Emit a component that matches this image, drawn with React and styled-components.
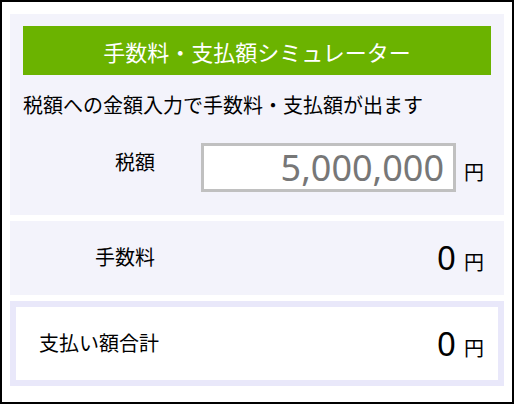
import React from "react";
import styled, { createGlobalStyle } from "styled-components";

const Global = createGlobalStyle`
  html, body { margin: 0; padding: 0; background: #fff; }
  body { font-family: "Noto Sans", "Noto Sans CJK JP", sans-serif; color: #000; }
  * { box-sizing: border-box; }
`;

const Frame = styled.div`
  width: 514px;
  height: 404px;
  border: 2px solid #000;
  padding: 12px 8px 0 8px;
  display: flex;
  flex-direction: column;
  gap: 6px;
`;

const Panel = styled.section`
  background: ${(p) => (p.$boxed ? "#fff" : "#f3f3fb")};
  border: ${(p) => (p.$boxed ? "6px solid #e9e8fa" : "none")};
  padding: ${(p) => p.$pad};
  height: ${(p) => p.$h}px;
  display: flex;
  flex-direction: column;
  justify-content: ${(p) => (p.$center ? "center" : "flex-start")};
`;

const Header = styled.h1`
  margin: 0;
  height: 49px;
  background: #6bb300;
  color: #fff;
  font-size: 22px;
  font-weight: 400;
  display: flex;
  align-items: center;
  justify-content: center;
  letter-spacing: 0;
`;

const Desc = styled.p`
  margin: 16px 0 0 0;
  font-size: 20px;
  line-height: 30px;
`;

const Row = styled.div`
  display: flex;
  align-items: center;
  margin-top: ${(p) => p.$mt || 0}px;
  padding-right: ${(p) => p.$pr}px;
`;

const Label = styled.div`
  width: ${(p) => p.$w}px;
  text-align: right;
  font-size: ${(p) => p.$fs || 20}px;
  line-height: 30px;
  margin-bottom: ${(p) => p.$lift || 0}px;
  flex: none;
`;

const Value = styled.div`
  flex: 1;
  display: flex;
  justify-content: flex-end;
  align-items: baseline;
`;

const Amount = styled.span`
  font-size: 33px;
  line-height: 40px;
`;

const Unit = styled.span`
  font-size: 20px;
  margin-left: 8px;
`;

const InputBox = styled.input`
  width: 255px;
  height: 49px;
  border: 3px solid #c0c0c0;
  background: #fff;
  color: #777;
  font-family: "Noto Sans", "Noto Sans CJK JP", sans-serif;
  font-size: 36px;
  text-align: right;
  padding: 0 9px 0 4px;
  outline: none;
`;

const InputWrap = styled.div`
  flex: 1;
  display: flex;
  justify-content: flex-end;
  align-items: center;
`;

const InputUnit = styled.span`
  font-size: 20px;
  margin-left: 8px;
  margin-top: 8px;
`;

export default function App() {
  return (
    <>
      <Global />
      <Frame>
        <Panel $pad="12px 13px 0 13px" $h={201}>
          <Header>手数料・支払額シミュレーター</Header>
          <Desc>税額への金額入力で手数料・支払額が出ます</Desc>
          <Row $mt={22} $pr={7}>
            <Label $w={132} $lift={10}>税額</Label>
            <InputWrap>
              <InputBox defaultValue="5,000,000" readOnly />
              <InputUnit>円</InputUnit>
            </InputWrap>
          </Row>
        </Panel>
        <Panel $pad="0 20px 0 0" $h={74} $center>
          <Row>
            <Label $w={145}>手数料</Label>
            <Value>
              <Amount>0</Amount>
              <Unit>円</Unit>
            </Value>
          </Row>
        </Panel>
        <Panel $boxed $pad="0 14px 0 0" $h={85} $center>
          <Row>
            <Label $w={143}>支払い額合計</Label>
            <Value>
              <Amount>0</Amount>
              <Unit>円</Unit>
            </Value>
          </Row>
        </Panel>
      </Frame>
    </>
  );
}
